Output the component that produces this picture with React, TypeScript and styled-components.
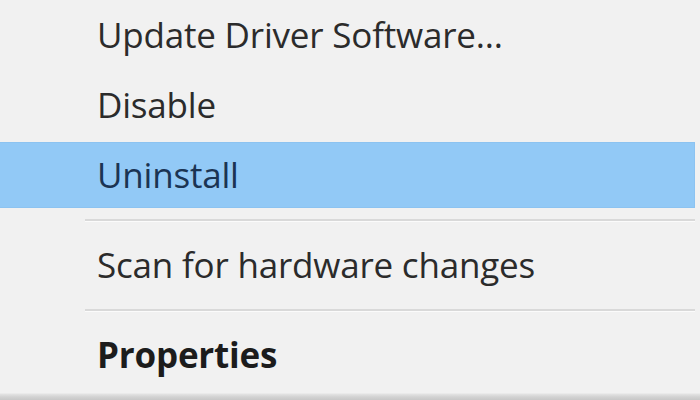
import React from 'react';
import styled, { createGlobalStyle } from 'styled-components';

const GlobalStyle = createGlobalStyle`
  html, body {
    margin: 0;
    padding: 0;
    background: #f1f1f1;
  }
`;

const Menu = styled.div`
  width: 700px;
  height: 400px;
  box-sizing: border-box;
  display: flex;
  flex-direction: column;
  background: linear-gradient(
    to bottom,
    #f1f1f1 393px,
    #e3e3e3 394px,
    #d2d2d2 397px,
    #c7c7c7 400px
  );
  padding: 0 5px 0 0;
  font-family: 'Open Sans', 'Noto Sans', sans-serif;
  overflow: hidden;
`;

const Item = styled.div`
  height: 70px;
  flex: none;
  display: flex;
  padding: 2px 0;
  box-sizing: border-box;
`;

const ItemInner = styled.div<{ $active?: boolean; $bold?: boolean }>`
  flex: 1;
  display: flex;
  align-items: center;
  padding-left: 97px;
  padding-bottom: 1px;
  background: ${p => (p.$active ? '#92c9f6' : 'transparent')};
  border: 1px solid ${p => (p.$active ? '#8cc3f1' : 'transparent')};
  border-left: none;
  color: ${p => (p.$active ? '#1b3453' : p.$bold ? '#1c1c1c' : '#2b2b2b')};
  font-size: 35px;
  font-weight: ${p => (p.$bold ? 700 : 400)};
  letter-spacing: -0.2px;
  white-space: nowrap;
`;

const Separator = styled.div`
  height: 20px;
  flex: none;
  display: flex;
  flex-direction: column;
  justify-content: center;
  padding-left: 85px;
  &::before {
    content: '';
    display: block;
    border-top: 2px solid #d9d9d9;
    border-bottom: 1px solid #fbfbfb;
  }
`;

type Entry = { label?: string; active?: boolean; bold?: boolean; sep?: boolean };

const entries: Entry[] = [
  { label: 'Update Driver Software...' },
  { label: 'Disable' },
  { label: 'Uninstall', active: true },
  { sep: true },
  { label: 'Scan for hardware changes' },
  { sep: true },
  { label: 'Properties', bold: true },
];

const App: React.FC = () => {
  return (
    <>
      <GlobalStyle />
      <Menu>
        {entries.map((e, i) =>
          e.sep ? (
            <Separator key={i} />
          ) : (
            <Item key={i}>
              <ItemInner $active={e.active} $bold={e.bold}>
                {e.label}
              </ItemInner>
            </Item>
          )
        )}
      </Menu>
    </>
  );
};

export default App;
